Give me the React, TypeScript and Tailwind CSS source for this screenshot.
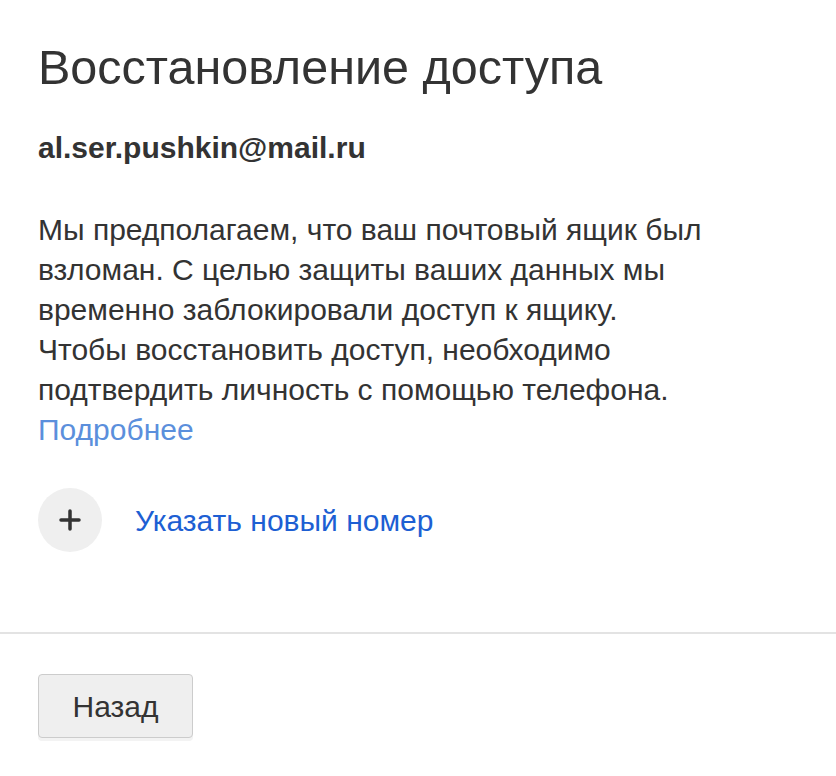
export default function App() {
    return (
        <div className="min-h-screen w-full bg-white font-['Liberation_Sans',Arial,sans-serif] text-[#333333]">
            <div className="px-[38px] pt-[39px]">
                <h1 className="text-[48.5px] leading-[56px] font-normal">Восстановление доступа</h1>
                <div className="mt-[35px] text-[30px] leading-[36px] font-bold">al.ser.pushkin@mail.ru</div>
                <p className="mt-[44px] w-[670px] text-[30px] leading-[40px]">
                    Мы предполагаем, что ваш почтовый ящик был взломан. С целью защиты ваших данных мы временно
                    заблокировали доступ к ящику. Чтобы восстановить доступ, необходимо подтвердить личность с
                    помощью телефона.
                    <br />
                    <a href="#" className="text-[#5b8fdc]">
                        Подробнее
                    </a>
                </p>
                <button className="mt-[38px] flex items-center gap-[33px] text-left">
                    <span className="flex h-[64px] w-[64px] items-center justify-center rounded-full bg-[#efefef]">
                        <svg width="22" height="22" viewBox="0 0 22 22" fill="none">
                            <path d="M11 2v18M2 11h18" stroke="#333" strokeWidth="3.5" strokeLinecap="round" />
                        </svg>
                    </span>
                    <span className="text-[30px] text-[#1d5fd3]">Указать новый номер</span>
                </button>
            </div>

            <div className="mt-[80px] h-[2px] w-full bg-[#e3e3e3]" />

            <div className="px-[38px] pt-[40px] pb-[38px]">
                <button className="h-[64px] w-[155px] rounded-[4px] border border-[#cccccc] bg-[#efefef] text-[30px] text-[#333] shadow-[0_3px_0_#f3f3f3]">
                    Назад
                </button>
            </div>
        </div>
    );
}
